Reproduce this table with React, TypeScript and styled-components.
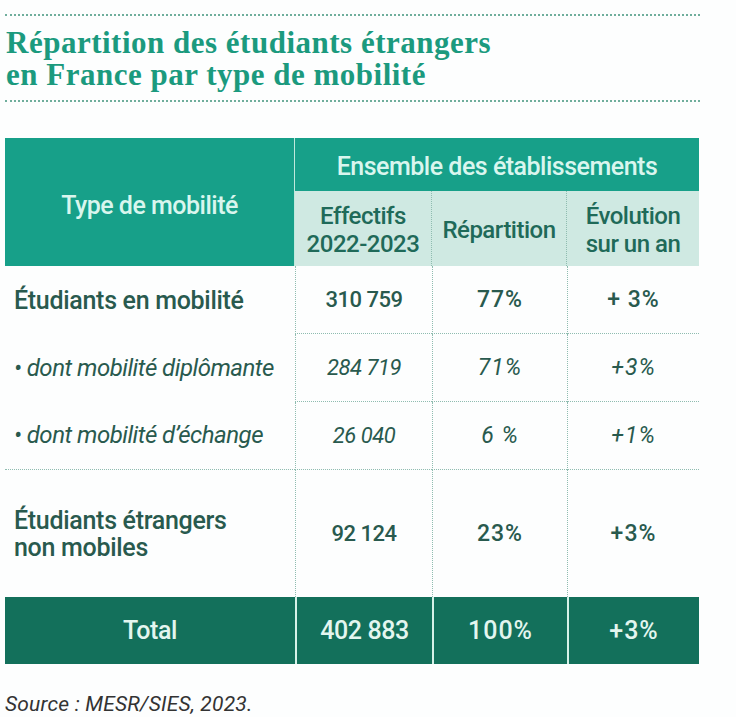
import React from "react";
import styled, { createGlobalStyle } from "styled-components";

const Global = createGlobalStyle`
  html, body { margin: 0; padding: 0; background: #ffffff; }
  body { font-family: Roboto, "Liberation Sans", sans-serif; }
`;

const Page = styled.div`
  width: 736px;
  height: 717px;
  padding: 14px 0 0 5px;
  box-sizing: border-box;
  background: #fdfefe;
  overflow: hidden;
`;

const Rule = styled.div`
  width: 695px;
  border-top: 2px dotted #6fae9c;
`;

const Title = styled.h1`
  margin: 0;
  padding: 11px 0 9px 1px;
  height: 84px;
  box-sizing: border-box;
  font-family: "Liberation Serif", "Times New Roman", serif;
  font-weight: 700;
  font-size: 31px;
  line-height: 32px;
  letter-spacing: 0.5px;
  color: #1b9a7e;
`;

const Table = styled.div`
  margin-top: 36px;
  width: 694px;
  display: grid;
  grid-template-columns: 290px 137px 135px 132px;
  grid-template-rows: 53px 75px 68px 68px 68px 127px 67px;
`;

const HeadMain = styled.div`
  grid-row: 1 / span 2;
  background: #17a089;
  color: #d9f6ee;
  font-size: 25px;
  font-weight: 500;
  letter-spacing: -0.5px;
  display: flex;
  align-items: center;
  justify-content: center;
  padding-top: 6px;
  box-sizing: border-box;
  border-right: 1px solid #bfe8dc;
`;

const HeadGroup = styled.div`
  grid-column: 2 / span 3;
  background: #17a089;
  color: #d9f6ee;
  font-size: 25px;
  font-weight: 500;
  letter-spacing: -0.5px;
  display: flex;
  align-items: center;
  justify-content: center;
  padding-top: 4px;
  box-sizing: border-box;
`;

const SubHead = styled.div<{ $last?: boolean }>`
  background: #cfe9e2;
  color: #1f6a59;
  font-size: 24px;
  font-weight: 500;
  line-height: 28px;
  letter-spacing: -0.5px;
  text-align: center;
  display: flex;
  align-items: center;
  justify-content: center;
  padding-top: 2px;
  box-sizing: border-box;
  border-right: ${(p) => (p.$last ? "none" : "1px dotted #8fbcb0")};
`;

const Label = styled.div<{ $italic?: boolean; $full?: boolean }>`
  display: flex;
  align-items: center;
  padding-left: 9px;
  color: #295a4e;
  font-size: ${(p) => (p.$italic ? "24px" : "25px")};
  font-style: ${(p) => (p.$italic ? "italic" : "normal")};
  font-weight: ${(p) => (p.$italic ? 400 : 500)};
  line-height: 27px;
  letter-spacing: ${(p) => (p.$italic ? "-0.5px" : "-0.3px")};
  border-bottom: ${(p) => (p.$full ? "1px dotted #8fbcb0" : "none")};
`;

const Cell = styled.div<{ $italic?: boolean; $bold?: boolean; $pct?: boolean; $line?: boolean }>`
  display: flex;
  align-items: center;
  justify-content: center;
  color: #295a4e;
  font-size: ${(p) => (p.$pct ? "23px" : "22px")};
  font-style: ${(p) => (p.$italic ? "italic" : "normal")};
  font-weight: ${(p) => (p.$bold ? 500 : 400)};
  letter-spacing: ${(p) => (p.$pct ? "1px" : "-0.5px")};
  border-left: 1px dotted #8fbcb0;
  border-bottom: ${(p) => (p.$line ? "1px dotted #8fbcb0" : "none")};
`;

const TotalCell = styled.div<{ $first?: boolean; $pct?: boolean }>`
  background: #13705b;
  color: #e3f6ef;
  font-size: 25px;
  font-weight: 500;
  letter-spacing: ${(p) => (p.$pct ? "1px" : "-0.4px")};
  display: flex;
  align-items: center;
  justify-content: center;
  border-left: ${(p) => (p.$first ? "none" : "2px solid #d6f1e8")};
`;

const Source = styled.p`
  margin: 28px 0 0 0;
  font-family: Roboto, "Liberation Sans", sans-serif;
  font-style: italic;
  font-size: 21px;
  line-height: 24px;
  letter-spacing: 0.2px;
  color: #333333;
`;

type Row = { label: string; v: [string, string, string]; italic?: boolean; bold?: boolean; line?: boolean; full?: boolean };

const rows: Row[] = [
  { label: "Étudiants en mobilité", v: ["310 759", "77%", "+ 3%"], bold: true, line: true },
  { label: "• dont mobilité diplômante", v: ["284 719", "71%", "+3%"], italic: true, line: true },
  { label: "• dont mobilité d’échange", v: ["26 040", "6 %", "+1%"], italic: true, line: true, full: true },
  { label: "Étudiants étrangers\nnon mobiles", v: ["92 124", "23%", "+3%"], bold: true },
];

export default function App() {
  return (
    <Page>
      <Global />
      <Rule />
      <Title>
        Répartition des étudiants étrangers
        <br />
        en France par type de mobilité
      </Title>
      <Rule />
      <Table>
        <HeadMain>Type de mobilité</HeadMain>
        <HeadGroup>Ensemble des établissements</HeadGroup>
        <SubHead>
          Effectifs
          <br />
          2022-2023
        </SubHead>
        <SubHead>Répartition</SubHead>
        <SubHead $last>
          Évolution
          <br />
          sur un an
        </SubHead>
        {rows.map((r) => (
          <React.Fragment key={r.label}>
            <Label $italic={r.italic} $full={r.full}>
              <span style={{ whiteSpace: "pre-line" }}>{r.label}</span>
            </Label>
            {r.v.map((x, i) => (
              <Cell key={i} $italic={r.italic} $bold={r.bold} $line={r.line} $pct={i > 0}>
                {x}
              </Cell>
            ))}
          </React.Fragment>
        ))}
        <TotalCell $first>Total</TotalCell>
        <TotalCell>402 883</TotalCell>
        <TotalCell $pct>100%</TotalCell>
        <TotalCell $pct>+3%</TotalCell>
      </Table>
      <Source>Source : MESR/SIES, 2023.</Source>
    </Page>
  );
}
